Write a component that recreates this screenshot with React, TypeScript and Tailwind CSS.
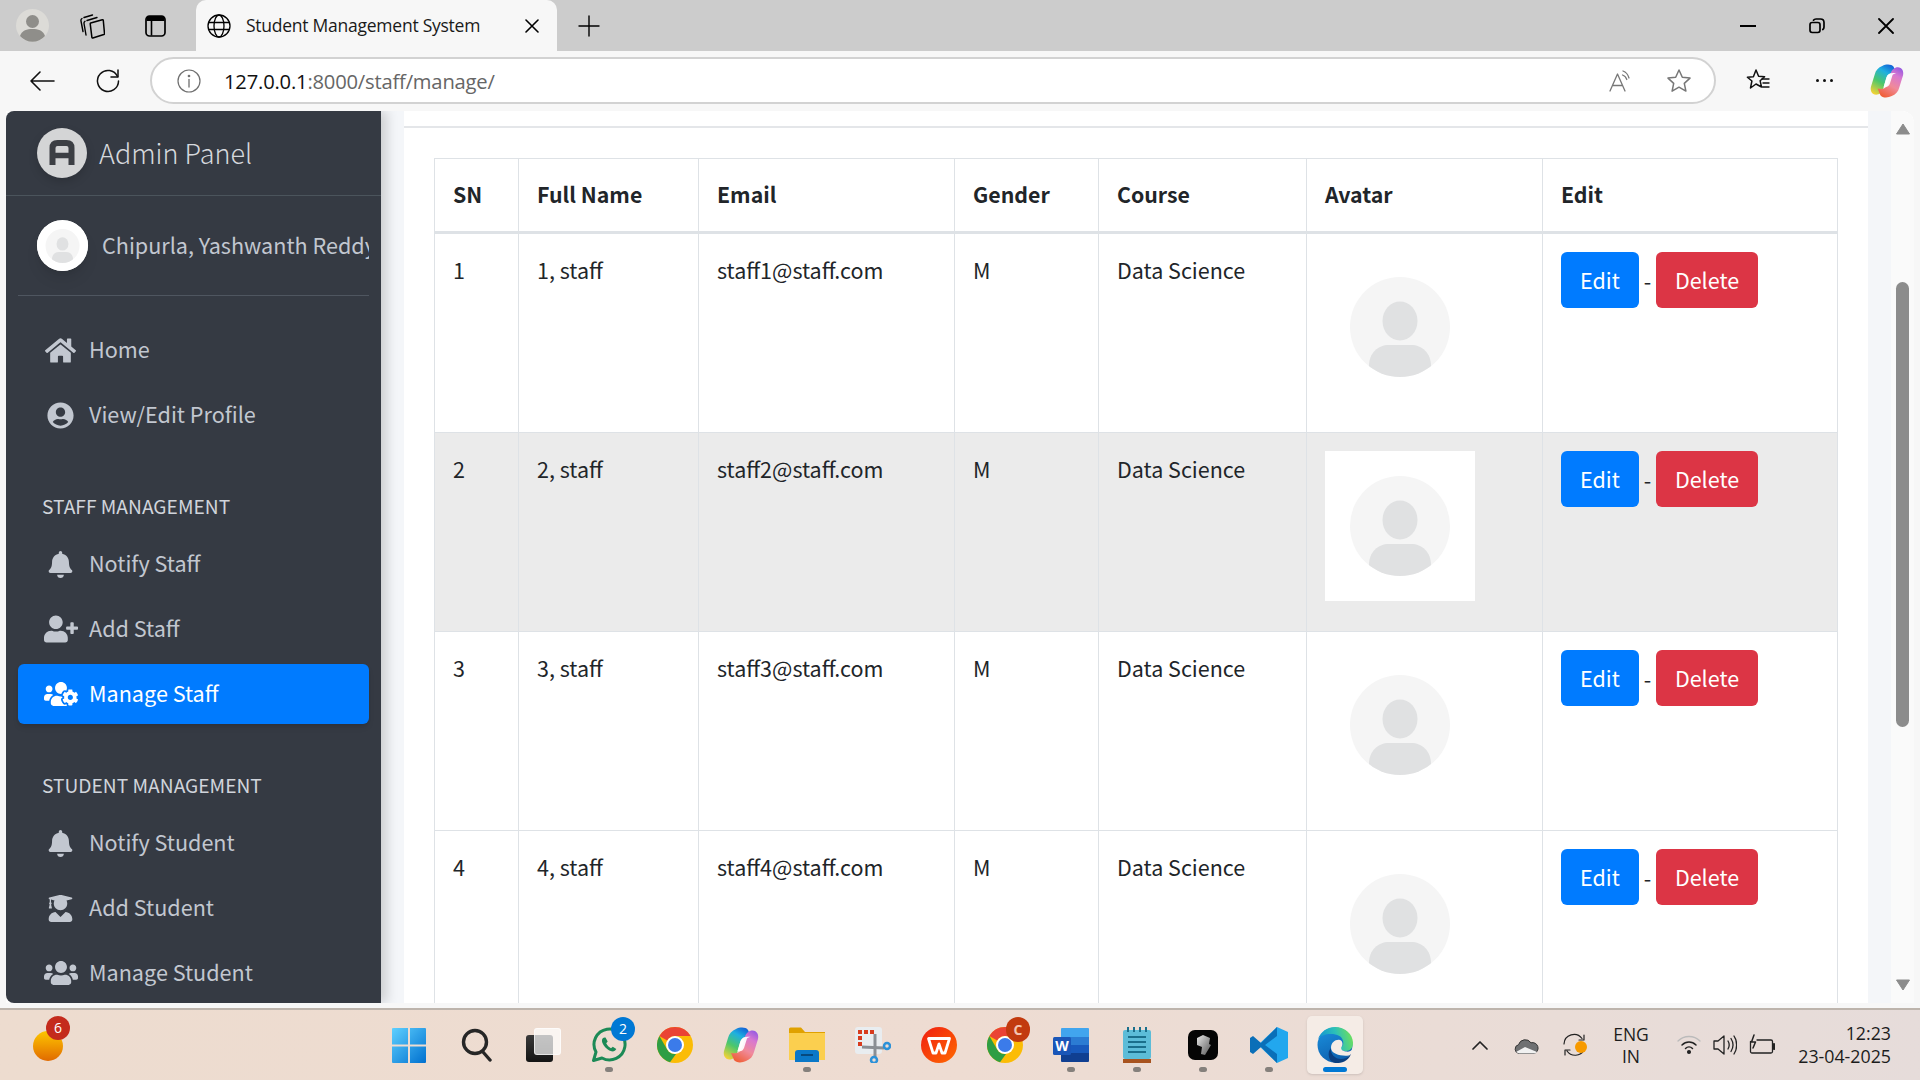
import React from "react";
import { FaHome, FaUserCircle, FaBell, FaUserPlus, FaUsersCog, FaUserGraduate, FaUsers } from "react-icons/fa";

const Avatar = ({ size = 150, bg = "#ffffff" }: { size?: number; bg?: string }) => (
  <svg width={size} height={size} viewBox="0 0 150 150" className="block">
    <defs>
      <clipPath id="ac"><circle cx="75" cy="75" r="50" /></clipPath>
    </defs>
    <rect width="150" height="150" fill={bg} />
    <circle cx="75" cy="75" r="50" fill="#f5f5f5" />
    <ellipse cx="75" cy="69" rx="17.5" ry="19.5" fill="#e0e1e2" />
    <path d="M44 130V114C44 101 53 93 64 93H86C97 93 106 101 106 114V130Z" fill="#e0e1e2" clipPath="url(#ac)" />
  </svg>
);

const rows = [
  { n: 1, bg: "", h: "h-[200px]" },
  { n: 2, bg: "bg-[#ebebeb]", h: "h-[199px]" },
  { n: 3, bg: "", h: "h-[199px]" },
  { n: 4, bg: "", h: "h-[199px]" },
];

const cell = "border border-[#dee2e6] p-[18px] align-top";

const Table = () => (
  <table className="table-fixed border-collapse w-[1403px] text-[21.5px] leading-[35px] text-[#212529]">
    <colgroup>
      <col className="w-[84px]" /><col className="w-[180px]" /><col className="w-[256px]" /><col className="w-[144px]" />
      <col className="w-[208px]" /><col className="w-[236px]" /><col className="w-[295px]" />
    </colgroup>
    <thead>
      <tr className="h-[74px]">
        {["SN", "Full Name", "Email", "Gender", "Course", "Avatar", "Edit"].map((h) => (
          <th key={h} className="border border-b-[3px] border-[#dee2e6] px-[18px] pt-[17px] pb-[16px] text-left font-bold align-top text-[21.3px]">{h}</th>
        ))}
      </tr>
    </thead>
    <tbody>
      {rows.map((r) => (
        <tr key={r.n} className={`${r.h} ${r.bg}`}>
          <td className={cell}>{r.n}</td>
          <td className={cell}>{r.n}, staff</td>
          <td className={cell}>staff{r.n}@staff.com</td>
          <td className={cell}>M</td>
          <td className={cell}>Data Science</td>
          <td className={cell}><Avatar /></td>
          <td className={cell}>
            <div className="flex items-center">
              <span className="w-[78px] h-[56px] pb-[2px] rounded-[6px] bg-[#007bff] text-white flex items-center justify-center">Edit</span>
              <span className="w-[17px] text-center">-</span>
              <span className="w-[102px] h-[56px] pb-[2px] rounded-[6px] bg-[#dc3545] text-white flex items-center justify-center">Delete</span>
            </div>
          </td>
        </tr>
      ))}
    </tbody>
  </table>
);

const NavItem = ({ icon, label, active }: { icon: React.ReactNode; label: string; active?: boolean }) => (
  <div className={`h-[60px] mb-[5px] mx-[12px] rounded-[6px] flex items-center ${active ? "bg-[#007bff] text-white shadow-md" : "text-[#c2c7d0]"}`}>
    <span className="w-[72px] pl-[13px] flex justify-center shrink-0">{icon}</span>
    <span className="text-[21.6px] leading-[34px] pb-[3px] -ml-[1px]">{label}</span>
  </div>
);

const NavHeader = ({ label, mt }: { label: string; mt: string }) => (
  <div className={`${mt} h-[56px] pl-[36px] pb-[13px] flex items-end text-[19.2px] leading-[30px] text-[#d0d4db]`}>{label}</div>
);

const Sidebar = () => (
  <aside className="w-[375px] shrink-0 bg-[#353a43] rounded-tl-[8px] rounded-bl-[8px] overflow-hidden shadow-[6px_0_12px_rgba(0,0,0,0.16)] z-10">
    <div className="h-[85px] border-b border-[#4b545c] flex items-center pl-[31px]">
      <svg width="50" height="50" viewBox="0 0 50 50" className="shrink-0 drop-shadow-lg">
        <circle cx="25" cy="25" r="25" fill="#d4d5d6" />
        <path d="M15.500 37V20C15.500 16.500 17.500 15 20.500 15H29.500C32.500 15 34.500 16.500 34.500 20V37" fill="none" stroke="#3c3f44" strokeWidth="6" />
        <path d="M15 27.500H35" stroke="#3c3f44" strokeWidth="5.500" />
      </svg>
      <span className="ml-[12px] text-[27px] font-light leading-[40px] pb-[1px] text-[#d5d8dd]">Admin Panel</span>
    </div>
    <div className="mx-[12px] pt-[24px] pb-[24px] border-b border-[#4f5660] flex items-center">
      <div className="ml-[19px] w-[51px] h-[51px] rounded-full overflow-hidden bg-white shrink-0 shadow-lg flex items-center justify-center">
        <Avatar size={72} />
      </div>
      <div className="ml-[14px] w-[267px] overflow-hidden whitespace-nowrap text-[21.6px] leading-[34px] pb-[2px] text-[#c2c7d0]">Chipurla, Yashwanth Reddy</div>
    </div>
    <nav className="pt-[24px]">
      <NavItem icon={<FaHome size={31} />} label="Home" />
      <NavItem icon={<FaUserCircle size={27} />} label="View/Edit Profile" />
      <NavHeader label="STAFF MANAGEMENT" mt="mt-[33px]" />
      <NavItem icon={<FaBell size={27} />} label="Notify Staff" />
      <NavItem icon={<FaUserPlus size={34} />} label="Add Staff" />
      <NavItem icon={<FaUsersCog size={34} />} label="Manage Staff" active />
      <NavHeader label="STUDENT MANAGEMENT" mt="mt-[33px]" />
      <NavItem icon={<FaBell size={27} />} label="Notify Student" />
      <NavItem icon={<FaUserGraduate size={27} />} label="Add Student" />
      <NavItem icon={<FaUsers size={34} />} label="Manage Student" />
    </nav>
  </aside>
);

const Scrollbar = () => (
  <div className="w-[23px] shrink-0 bg-[#fafafa] rounded-tr-[12px] flex flex-col items-center">
    <svg width="14" height="12" viewBox="0 0 14 12" className="mt-[12px]"><path d="M7 1L13.500 11H.5Z" fill="#8c8c8c" stroke="#8c8c8c" strokeLinejoin="round" /></svg>
    <div className="mt-[147px] w-[13px] h-[445px] rounded-full bg-[#8c8c8c]" />
    <svg width="14" height="12" viewBox="0 0 14 12" className="mt-[252px]"><path d="M7 11L13.500 1H.5Z" fill="#8c8c8c" stroke="#8c8c8c" strokeLinejoin="round" /></svg>
  </div>
);

const Page = () => (
  <div className="h-[898px] bg-[#f7f7f7] px-[6px] flex items-start">
    <div className="h-[892px] mt-[1px] flex-1 flex overflow-hidden rounded-tr-[12px] bg-white">
      <Sidebar />
      <div className="w-[23px] shrink-0 bg-[#f4f6f9]" />
      <main className="w-[1464px] shrink-0 bg-white overflow-hidden">
        <div className="h-[17px] border-b-2 border-[#e4e6e9]" />
        <div className="pt-[30px] pl-[30px]"><Table /></div>
      </main>
      <div className="w-[23px] shrink-0 bg-[#f4f6f9]" />
      <Scrollbar />
    </div>
  </div>
);

const S = ({ w = 24, h = 24, children, vb = "0 0 24 24", cls = "" }: { w?: number; h?: number; children: React.ReactNode; vb?: string; cls?: string }) => (
  <svg width={w} height={h} viewBox={vb} fill="none" stroke="currentColor" strokeWidth="1.5" strokeLinecap="round" strokeLinejoin="round" className={`shrink-0 ${cls}`}>{children}</svg>
);

const Copilot = ({ size = 34, id = "a" }: { size?: number; id?: string }) => (
  <svg width={size} height={size} viewBox="0 0 36 36" className="shrink-0">
    <defs>
      <linearGradient id={`cp1${id}`} x1="0.7" y1="0" x2="0.2" y2="1"><stop offset="0" stopColor="#1368d8" /><stop offset="0.25" stopColor="#1fb0e0" /><stop offset="0.6" stopColor="#4cc76a" /><stop offset="1" stopColor="#f2d236" /></linearGradient>
      <linearGradient id={`cp2${id}`} x1="0.3" y1="1" x2="0.8" y2="0"><stop offset="0" stopColor="#f0603a" /><stop offset="0.4" stopColor="#f08a9a" /><stop offset="0.75" stopColor="#d878d0" /><stop offset="1" stopColor="#9a5ce0" /></linearGradient>
    </defs>
    <path d="M13 2C17 0 23 0 25 3L28 10C23 9 19 10 17.500 14L14 26C13 30 10 32.500 6.500 32.500 2 32.500 0 28 1 24L5 11C6 6.500 9 3.500 13 2Z" fill={`url(#cp1${id})`} />
    <path d="M23 34C19 36 13 36 11 33L8 26C13 27 17 26 18.500 22L22 10C23 6 26 3.500 29.500 3.500 34 3.500 36 8 35 12L31 25C30 29.500 27 32.500 23 34Z" fill={`url(#cp2${id})`} />
    <path d="M28 10C23 9 19 10 17.500 14L14.500 24C18 25 20 23.500 21 21L24 11.500C25 10.500 26.500 10 28 10Z" fill="#ffffff" opacity="0.92" />
  </svg>
);

const TabBar = () => (
  <div className="h-[51px] bg-[#cccccc] flex items-end text-black shrink-0">
    <div className="w-[196px] h-[51px] flex items-center pl-[16px] shrink-0">
      <svg width="33" height="33" viewBox="0 0 33 33" className="shrink-0">
        <circle cx="16.500" cy="16.500" r="16.500" fill="#dcdbd7" />
        <circle cx="16.500" cy="12.500" r="6.500" fill="#8f8e8a" />
        <path d="M4 27C6 21 11 20 16.500 20S27 21 29 27A16.500 16.500 0 0 1 4 27Z" fill="#8f8e8a" />
      </svg>
      <span className="ml-[31px] flex">
        <S w={25} h={26} vb="0 0 25 26">
          <path d="M10.700 10L22.300 6.700C23 6.500 23.200 7 23.300 7.500L24.500 20.500C24.500 21 24.300 21.300 23.800 21.500L12.800 25C12.300 25.100 12 24.900 11.900 24.400L10.200 10.700C10.200 10.400 10.400 10.100 10.700 10Z" strokeWidth="1.500" />
          <path d="M7 7.500L17 4.500M4 10.500C3.800 9.500 4 9 5 8.300M6 22L4 10.500" strokeWidth="1.400" />
          <path d="M4 4.500L12.500 2M1 8C.8 7 1.200 6 2 5.500M3 18.500L1 8" strokeWidth="1.400" />
        </S>
      </span>
      <span className="ml-[40px] flex"><svg width="21" height="22" viewBox="0 0 21 22" fill="none"><rect x="1" y="1" width="19" height="20" rx="3.500" stroke="#000" strokeWidth="1.700" /><path d="M1.500 4a3 3 0 0 1 3-3h12a3 3 0 0 1 3 3V6h-18Z" fill="#000" /><path d="M6.500 6v14.500" stroke="#000" strokeWidth="1.600" /></svg></span>
    </div>
    <div className="w-[361px] h-[51px] bg-[#f7f7f7] rounded-t-[10px] flex items-center pl-[11px] shrink-0">
      <S w={24} h={24} cls="text-black"><circle cx="12" cy="12" r="11" strokeWidth="1.300" /><ellipse cx="12" cy="12" rx="5" ry="11" strokeWidth="1.300" /><path d="M1.500 8.500h21M1.500 15.500h21" strokeWidth="1.300" /></S>
      <span className="ml-[15px] w-[280px] text-[17.5px] leading-[24px] pb-[2px] whitespace-nowrap font-['Open_Sans',sans-serif] tracking-[-0.25px] text-[#1a1a1a]">Student Management System</span>
      <S w={14} h={14} vb="0 0 14 14" cls="ml-[-1px]"><path d="M1 1l12 12M13 1L1 13" strokeWidth="1.600" /></S>
    </div>
    <div className="w-[64px] h-[51px] flex items-center justify-center shrink-0">
      <S w={22} h={22} vb="0 0 22 22"><path d="M11 1v20M1 11h20" strokeWidth="1.400" /></S>
    </div>
    <div className="flex-1" />
    <div className="h-[51px] flex items-center shrink-0">
      <span className="w-[69px] flex justify-center"><S w={16} h={4} vb="0 0 16 4"><path d="M0 2h16" strokeWidth="2" /></S></span>
      <span className="w-[69px] flex justify-center"><S w={16} h={16} vb="0 0 16 16"><rect x="1" y="4.500" width="10" height="10" rx="2.200" strokeWidth="1.700" /><path d="M4.500 2.200C5 1.400 6 1 7 1h4.500C13.500 1 15 2.500 15 4.500V9c0 1-.4 2-1.200 2.500" strokeWidth="1.700" /></S></span>
      <span className="w-[69px] flex justify-center"><S w={16} h={16} vb="0 0 16 16"><path d="M1 1l14 14M15 1L1 15" strokeWidth="1.800" /></S></span>
    </div>
  </div>
);

const Toolbar = () => (
  <div className="h-[59px] bg-[#f7f7f7] flex items-center shrink-0">
    <span className="w-[84px] flex justify-center"><S w={26} h={24} vb="0 0 26 24" cls="text-[#111]"><path d="M25 12H2M11 3l-9 9 9 9" strokeWidth="1.600" /></S></span>
    <span className="w-[48px] flex justify-center"><S w={26} h={26} vb="0 0 26 26" cls="text-[#111]"><path d="M22.500 8.500A10.500 10.500 0 1 0 23.500 13" strokeWidth="1.500" /><path d="M23 2v7h-7" strokeWidth="1.500" /></S></span>
    <div className="ml-[18px] w-[1566px] h-[47px] bg-white rounded-full border-2 border-[#d2d2d2] flex items-center shrink-0">
      <S w={24} h={24} cls="ml-[25px] text-[#6f6f6f]"><circle cx="12" cy="12" r="11" strokeWidth="1.200" /><path d="M12 10.500V18" strokeWidth="1.300" /><circle cx="12" cy="7" r=".6" /></S>
      <span className="ml-[23px] text-[20.200px] leading-[28px] font-['Open_Sans',sans-serif] tracking-[-0.2px] text-[#111]">127.0.0.1<span className="text-[#666]">:8000/staff/manage/</span></span>
      <div className="flex-1" />
      <S w={26} h={24} vb="0 0 26 24" cls="text-[#777]"><path d="M2 22 9.500 5 17 22M4.500 16.500H14.500" strokeWidth="1.300" /><path d="M15 2c3 1 5 3.500 6 7M14.500 6c2 .6 3.500 2 4.300 4.500" strokeWidth="1.300" /></S>
      <S w={26} h={26} vb="0 0 26 26" cls="ml-[32px] mr-[22px] text-[#777]"><path d="M13 2l3.300 7.200 7.700.9-5.700 5.300 1.600 7.700L13 19.200 6.100 23.100l1.600-7.700L2 10.100l7.700-.9Z" strokeWidth="1.500" /></S>
    </div>
    <span className="ml-[25px] w-[34px] flex justify-center"><S w={26} h={26} vb="0 0 26 26" cls="text-[#111]"><path d="M11 2l2.600 6.200 6 .5-4.500 4 1.400 6.300L11 16l-5.500 4 1.400-7-4.500-3.800 6-.5Z" strokeWidth="1.500" /><path d="M17 11h7M18 15h6M17.500 19h6.500" strokeWidth="1.400" /></S></span>
    <span className="ml-[33px] w-[32px] flex justify-center gap-[4px]"><i className="w-[3px] h-[3px] rounded-full bg-[#111]" /><i className="w-[3px] h-[3px] rounded-full bg-[#111]" /><i className="w-[3px] h-[3px] rounded-full bg-[#111]" /></span>
    <span className="ml-[30px] flex"><Copilot id="t" /></span>
  </div>
);

const Chrome = ({ size = 36 }: { size?: number }) => (
  <svg width={size} height={size} viewBox="0 0 36 36" className="shrink-0">
    <circle cx="18" cy="18" r="18" fill="#fbbc05" />
    <path d="M18 0A18 18 0 0 1 33.600 9H18A9 9 0 0 0 10.200 13.500L2.400 9A18 18 0 0 1 18 0Z" fill="#ea4335" />
    <path d="M2.400 9L10.200 22.500A9 9 0 0 0 19 27L13 35.300A18 18 0 0 1 2.400 9Z" fill="#2f9e44" />
    <circle cx="18" cy="18" r="9" fill="#fff" />
    <circle cx="18" cy="18" r="7" fill="#3b7bea" />
  </svg>
);

const Dot = () => <i className="w-[8px] h-[5px] rounded-full bg-[#85807c] absolute bottom-[8px] left-[29px]" />;

const TbItem = ({ children, dot, active, w = "w-[66px]" }: { children: React.ReactNode; dot?: boolean; active?: boolean; w?: string }) => (
  <div className={`relative ${w} h-[70px] flex items-center justify-center shrink-0`}>
    {active && <div className="absolute left-[5px] right-[5px] top-[6px] bottom-[6px] rounded-[5px] bg-[#f5ece6] shadow-sm" />}
    <div className="relative flex">{children}</div>
    {dot && <Dot />}
    {active && <i className="absolute bottom-[8px] left-[21px] w-[24px] h-[5px] rounded-full bg-[#0078d4]" />}
  </div>
);

const trayFont = "font-['Open_Sans',sans-serif]";

const Taskbar = () => (
  <div className="h-[72px] border-t-2 border-[#bdb4ac] bg-gradient-to-r from-[#eddccf] via-[#eedcd2] to-[#e6dcda] flex items-center shrink-0 text-[#1c1c1c]">
    <div className="relative ml-[33px] w-[30px] h-[30px] mt-[1px] rounded-full bg-gradient-to-b from-[#fcc600] to-[#e06a00] shrink-0">
      <span className={`absolute -top-[15px] left-[13px] w-[24px] h-[24px] rounded-full bg-[#c42b1c] text-white text-[14px] leading-[24px] text-center ${trayFont}`}>6</span>
    </div>
    <div className="ml-[313px] flex items-center shrink-0">
      <TbItem w="w-[68px] pr-[2px]">
        <svg width="34" height="35" viewBox="0 0 34 35">
          <defs><linearGradient id="win" x1="0" y1="0" x2="1" y2="1"><stop offset="0" stopColor="#5ed0ff" /><stop offset="1" stopColor="#0070cf" /></linearGradient></defs>
          <path d="M1 0H16V16.500H0V1A1 1 0 0 1 1 0ZM18 0H33A1 1 0 0 1 34 1V16.500H18ZM0 18.500H16V35H1A1 1 0 0 1 0 34ZM18 18.500H34V34A1 1 0 0 1 33 35H18Z" fill="url(#win)" />
        </svg>
      </TbItem>
      <TbItem>
        <svg width="32" height="34" viewBox="0 0 32 34" fill="none" stroke="#262626" strokeWidth="3.400" strokeLinecap="round"><circle cx="14" cy="14" r="11.500" /><path d="M22 24l7 8" /></svg>
      </TbItem>
      <TbItem>
        <div className="w-[35px] h-[34px] relative">
          <div className="absolute left-0 bottom-0 w-[27px] h-[27px] rounded-[3px] bg-gradient-to-b from-[#3a3a3a] to-[#141414]" />
          <div className="absolute right-0 top-0 w-[27px] h-[27px] rounded-[3px] bg-white/70 border border-white/60" />
        </div>
      </TbItem>
      <TbItem dot>
        <div className="relative">
          <svg width="36" height="36" viewBox="0 0 36 36" fill="none">
            <path d="M2.500 33.500L5 25A15.500 15.500 0 1 1 11 31Z" stroke="#1c8a56" strokeWidth="3" strokeLinejoin="round" />
            <path d="M12 11c-1.500 1.500-1.500 4 .5 7s5 5.500 8 6.300c2 .5 4-.5 4.800-2.300l-3.500-2.300-1.800 1.500c-2-1-3.800-3-4.800-5l1.500-1.800L14.500 10.500C13.500 10.300 12.700 10.400 12 11Z" fill="#1c8a56" />
          </svg>
          <span className={`absolute -top-[10px] left-[20px] w-[24px] h-[24px] rounded-full bg-[#0078d4] text-white text-[14px] leading-[24px] text-center ${trayFont}`}>2</span>
        </div>
      </TbItem>
      <TbItem><Chrome /></TbItem>
      <TbItem><Copilot size={36} id="b" /></TbItem>
      <TbItem dot>
        <svg width="36" height="36" viewBox="0 0 36 36">
          <path d="M0 2a1.500 1.500 0 0 1 1.500-1.500H12L16 5H36V10H0Z" fill="#e0a100" />
          <path d="M0 6H36V33H0Z" fill="#fbcf4f" />
          <path d="M6 33V26a3 3 0 0 1 3-3H27a3 3 0 0 1 3 3V35H6Z" fill="#0a78c8" />
          <path d="M12 28H24" stroke="#06497e" strokeWidth="2" />
        </svg>
      </TbItem>
      <TbItem>
        <svg width="36" height="36" viewBox="0 0 36 36" fill="none">
          <rect x="0" y="0" width="27" height="27" rx="3" fill="#e9edf0" />
          <path d="M3 3h4v4H3zM9 3h4v4H9zM15 3h4v4h-4zM3 9h4v4H3zM3 15h4v4H3z" fill="#d83b1d" />
          <path d="M20 7L20 30" stroke="#8a8f94" strokeWidth="3" />
          <path d="M7 20L29 21" stroke="#8a8f94" strokeWidth="3" />
          <circle cx="32" cy="19" r="3" stroke="#2b91d8" strokeWidth="2.500" />
          <circle cx="19" cy="33" r="3" stroke="#2b91d8" strokeWidth="2.500" />
        </svg>
      </TbItem>
      <TbItem>
        <svg width="36" height="36" viewBox="0 0 36 36">
          <defs><linearGradient id="wps" x1="0" y1="0" x2="1" y2="1"><stop offset="0" stopColor="#f01e12" /><stop offset="1" stopColor="#ff6a00" /></linearGradient></defs>
          <circle cx="18" cy="18" r="18" fill="url(#wps)" />
          <path d="M7.500 11.500H28.500L24 26H21L18 17 15 26H12Z" fill="none" stroke="#fff" strokeWidth="2.800" strokeLinejoin="round" />
        </svg>
      </TbItem>
      <TbItem>
        <div className="relative">
          <Chrome />
          <span className={`absolute -top-[10px] left-[19px] w-[24px] h-[25px] rounded-full bg-[#c23a0e] text-[#f4c4b0] text-[14px] font-bold leading-[25px] text-center ${trayFont}`}>C</span>
        </div>
      </TbItem>
      <TbItem dot>
        <svg width="36" height="36" viewBox="0 0 36 36">
          <path d="M8 2a1 1 0 0 1 1-1H35a1 1 0 0 1 1 1V10H8Z" fill="#41a5ee" />
          <path d="M8 10H36V18H8Z" fill="#2b7cd3" />
          <path d="M8 18H36V26H8Z" fill="#185abd" />
          <path d="M8 26H36V34a1 1 0 0 1-1 1H9a1 1 0 0 1-1-1Z" fill="#103f91" />
          <rect x="0" y="10" width="18" height="18" rx="1.500" fill="#1a56b8" />
          <text x="9" y="24" fontSize="14" fontWeight="700" fill="#fff" textAnchor="middle" fontFamily="Open Sans, sans-serif">W</text>
        </svg>
      </TbItem>
      <TbItem dot>
        <svg width="28" height="36" viewBox="0 0 28 36">
          <rect x="0" y="3" width="28" height="29" rx="2" fill="#5cbcd8" />
          <rect x="0" y="32" width="28" height="4" fill="#a8531f" />
          <path d="M5 10H23M5 15H23M5 20H23M5 25H23" stroke="#1a6f8c" strokeWidth="2" />
          <path d="M5 0v5M11 0v5M17 0v5M23 0v5" stroke="#1a6f8c" strokeWidth="2" />
        </svg>
      </TbItem>
      <TbItem dot>
        <svg width="30" height="30" viewBox="0 0 30 30">
          <defs><linearGradient id="dk" x1="0" y1="0" x2="1" y2="1"><stop offset="0" stopColor="#e8e8e8" /><stop offset="1" stopColor="#555" /></linearGradient></defs>
          <rect x="0" y="0" width="30" height="30" rx="7" fill="#050505" />
          <path d="M9 8L15 5 22 8 21 14 23 15 17 25 13 24 14 17 9 15Z" fill="url(#dk)" />
        </svg>
      </TbItem>
      <TbItem dot>
        <svg width="38" height="38" viewBox="0 0 38 38">
          <path d="M27 1L38 6V32L27 37 8 19Z" fill="#22a7ee" />
          <path d="M27 1L11 17 3 10 0 12V26L3 28 11 21 27 37V28L15 19 27 10Z" fill="#0a6fb8" />
        </svg>
      </TbItem>
      <TbItem active>
        <svg width="36" height="36" viewBox="0 0 36 36">
          <defs>
            <linearGradient id="e1" x1="0" y1="0.6" x2="1" y2="0.4"><stop offset="0" stopColor="#0f8ed6" /><stop offset="0.55" stopColor="#2cc0b8" /><stop offset="1" stopColor="#6fe05a" /></linearGradient>
            <linearGradient id="e2" x1="0.2" y1="0" x2="0.6" y2="1"><stop offset="0" stopColor="#1a8fdc" /><stop offset="1" stopColor="#0d5fae" /></linearGradient>
          </defs>
          <circle cx="18" cy="18" r="17.500" fill="url(#e2)" />
          <path d="M1 12C4 4 11 0 18 0 28 0 36 7 36 16 36 21 33 24 29 24 26 24 23 23 24 21 25 19 27 18 26 14 25 9 20 7 14 7 8 7 3 9 1 12Z" fill="url(#e1)" />
          <path d="M14 21C14 15 19 12 23 13 26 14 26 18 24.500 20 23.500 22 25 24 29 24.500 32 25 34 24 35.500 22.500L34 28C28 30 14 28 14 21Z" fill="#f5ece6" />
          <path d="M14 21C13 27 18 32 24 32 28 32 31 30 34 27 31 35 24 36 20 36 16 36 13 34 12 30 11 26 12 23 14 21Z" fill="#0b3f80" />
        </svg>
      </TbItem>
    </div>
    <div className="ml-[104px] flex items-center shrink-0">
      <S w={16} h={10} vb="0 0 16 10" cls="text-[#222]"><path d="M1 9l7-7 7 7" strokeWidth="1.700" /></S>
      <svg width="25" height="17" viewBox="0 0 25 17" className="ml-[26px] shrink-0">
        <path d="M5 16.500A4.500 4.500 0 0 1 4.500 7.700 7 7 0 0 1 17 5.800 5.500 5.500 0 0 1 20 16.500Z" fill="#6f7072" stroke="#333" strokeWidth="1" />
        <path d="M2 15l9-5 12 5-2 1.500H5Z" fill="#f1f1f1" />
      </svg>
      <div className="relative ml-[24px] w-[24px] h-[24px] shrink-0">
        <S w={24} h={24} vb="0 0 24 24" cls="text-[#222]"><path d="M1 11A10 10 0 0 1 19 5.500M21 2v5h-5M21 17A10 10 0 0 1 4 18M2 22v-5h5" strokeWidth="1.200" /></S>
        <i className="absolute left-[12px] top-[8px] w-[12px] h-[12px] rounded-full bg-[#f79a00]" />
      </div>
      <div className={`ml-[25px] w-[38px] text-center text-[17.500px] leading-[22px] ${trayFont}`}><div>ENG</div><div>IN</div></div>
      <S w={24} h={20} vb="0 0 24 20" cls="ml-[27px] text-[#222]"><path d="M1 6c6-6 16-6 22 0" strokeWidth="1.300" stroke="#bbb" /><path d="M5 10c4-4 10-4 14 0M8.500 13.500c2-2 5-2 7 0" strokeWidth="1.500" /><circle cx="12" cy="17" r="1.300" fill="currentColor" /></S>
      <S w={24} h={22} vb="0 0 24 22" cls="ml-[12px] text-[#222]"><path d="M1 7v8h4l6 5V2L5 7Z" strokeWidth="1.300" /><path d="M15 7c1.500 2.500 1.500 5.500 0 8M18 4.500c2.500 4 2.500 9 0 13M21 2c3.500 5 3.500 13 0 18" strokeWidth="1.300" /></S>
      <S w={26} h={22} vb="0 0 26 22" cls="ml-[12px] text-[#222]"><path d="M8 6h14a1.500 1.500 0 0 1 1.500 1.500v10a1.500 1.500 0 0 1-1.500 1.500H3a1.500 1.500 0 0 1-1.500-1.500V7.500" strokeWidth="1.300" /><path d="M5 1L2.500 8H6.500L4 14" strokeWidth="1.500" /><path d="M25 10v5" strokeWidth="2.200" /></S>
      <div className={`ml-[19px] w-[97px] text-right text-[17.800px] leading-[23px] whitespace-nowrap ${trayFont}`}><div>12:23</div><div>23-04-2025</div></div>
    </div>
  </div>
);

export default function App() {
  return (
    <div className="w-[1920px] h-[1080px] overflow-hidden flex flex-col bg-white font-['Noto_Sans_CJK_JP','Noto_Sans',sans-serif]">
      <TabBar />
      <Toolbar />
      <Page />
      <Taskbar />
    </div>
  );
}
